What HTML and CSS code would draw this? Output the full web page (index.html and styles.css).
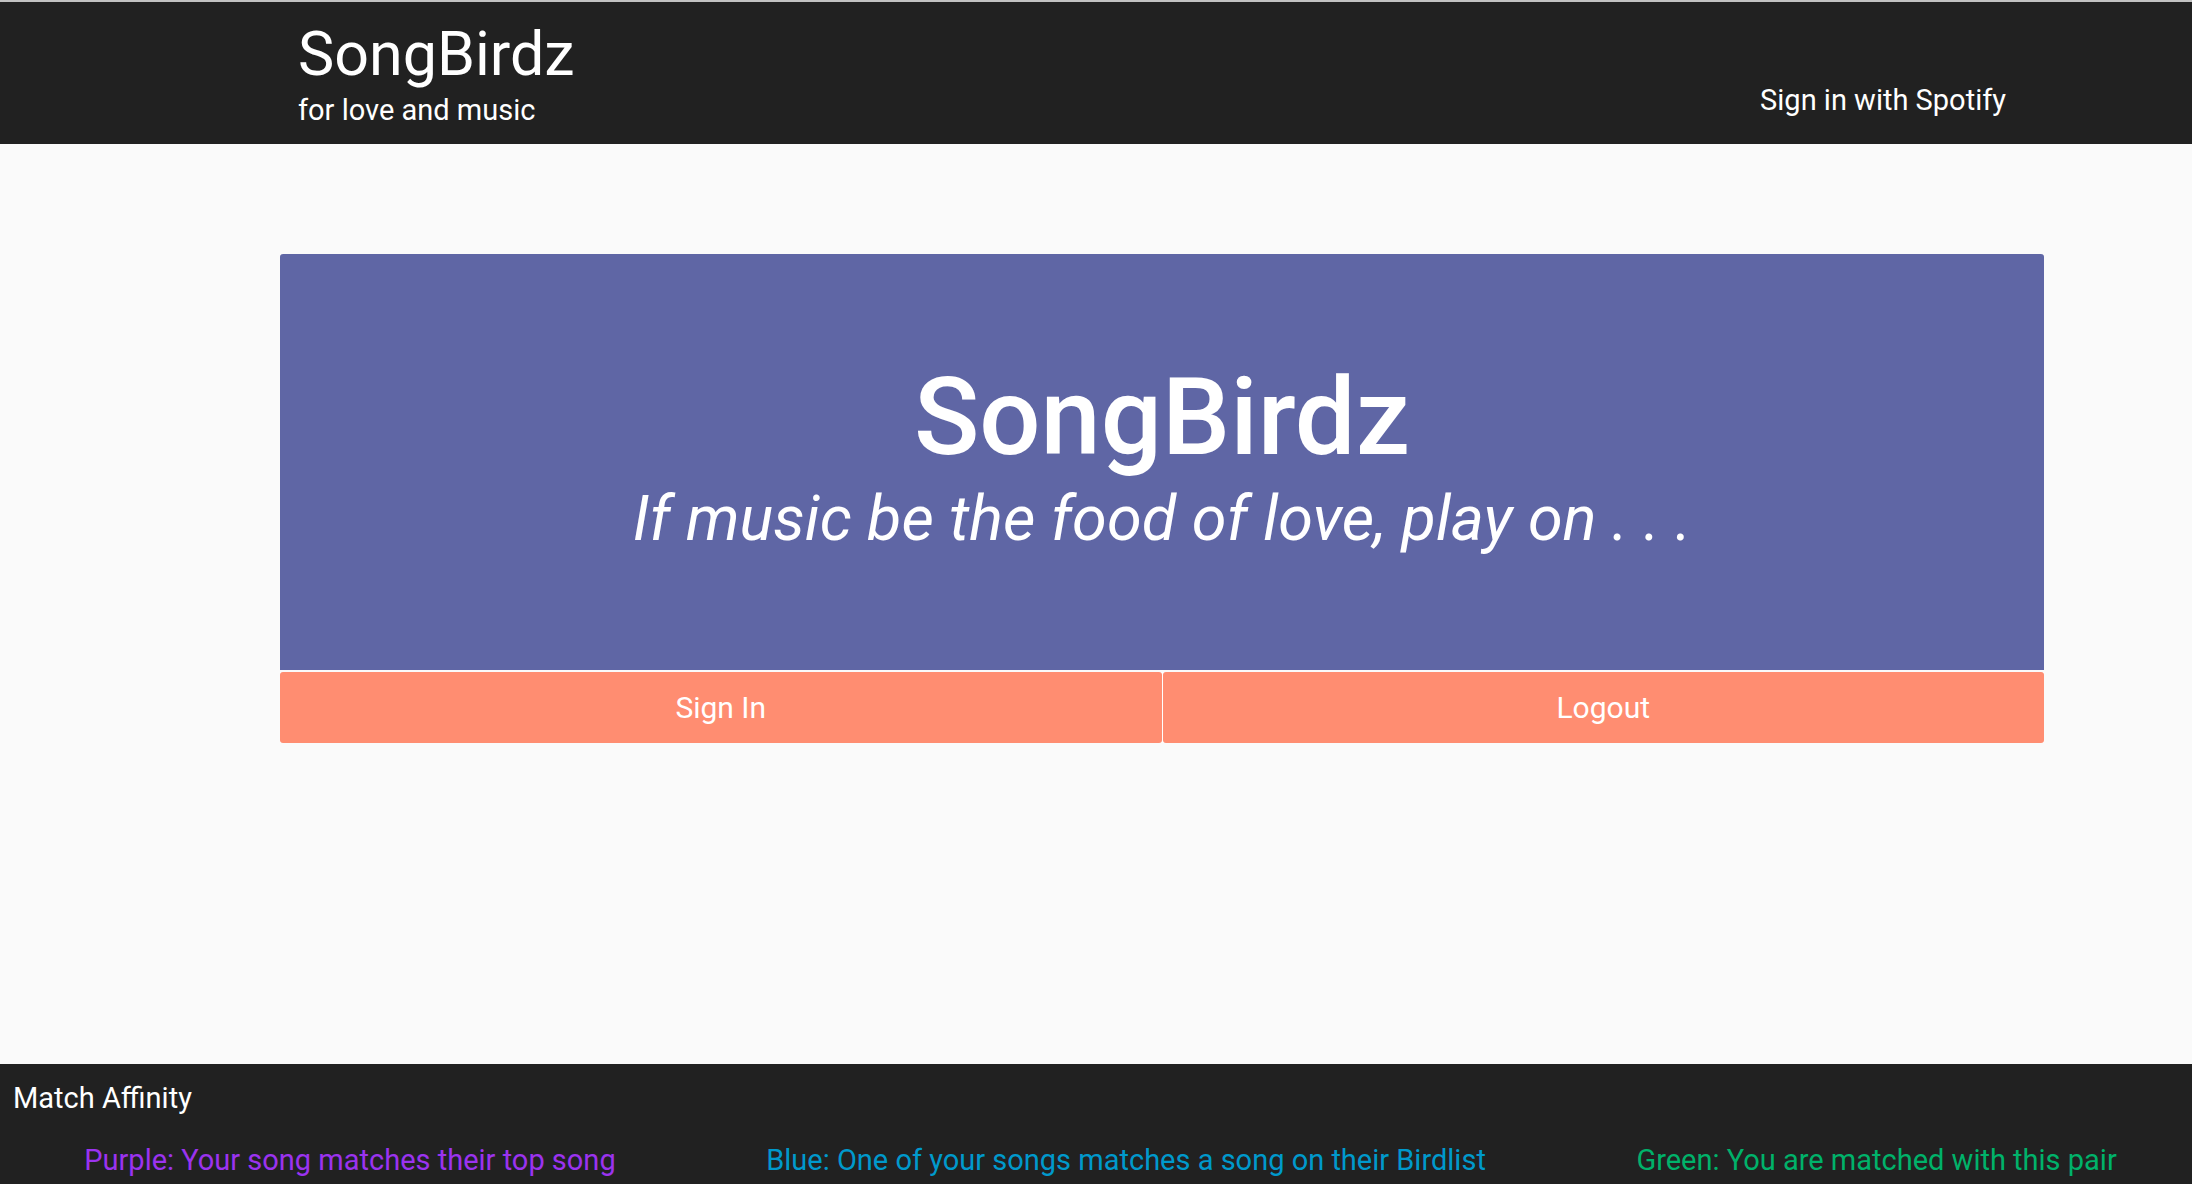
FILE: index.html
```html
<!DOCTYPE html>
<html lang="en">
<head>
<meta charset="utf-8">
<title>SongBirdz</title>
<link rel="stylesheet" href="styles.css">
</head>
<body>
<nav class="navbar">
  <div class="brand">
    <div class="brand-title">SongBirdz</div>
    <div class="brand-sub">for love and music</div>
  </div>
  <a class="nav-link" href="#">Sign in with Spotify</a>
</nav>
<main class="main">
  <section class="card">
    <div class="hero">
      <h1 class="hero-title">SongBirdz</h1>
      <p class="hero-tagline">If music be the food of love, play on . . .</p>
    </div>
    <div class="actions">
      <button class="btn">Sign In</button>
      <button class="btn">Logout</button>
    </div>
  </section>
</main>
<footer class="footer">
  <div class="footer-title">Match Affinity</div>
  <div class="legend">
    <span class="legend-item purple">Purple: Your song matches their top song</span>
    <span class="legend-item blue">Blue: One of your songs matches a song on their Birdlist</span>
    <span class="legend-item green">Green: You are matched with this pair</span>
  </div>
</footer>
</body>
</html>
```
FILE: styles.css
```css
html, body {
  margin: 0;
  padding: 0;
  overflow: hidden;
}
body {
  background: #fafafa;
  font-family: Roboto, "Noto Sans", sans-serif;
  color: #fff;
}
.navbar {
  box-sizing: border-box;
  height: 144px;
  background: #212121;
  border-top: 2px solid #c2c2c2;
  display: flex;
  justify-content: space-between;
  align-items: flex-start;
  padding: 0 186px 0 298px;
}
.brand {
  display: flex;
  flex-direction: column;
  padding-top: 22px;
}
.brand-title {
  font-size: 61px;
  line-height: 60px;
}
.brand-sub {
  font-size: 29px;
  line-height: 32px;
  margin-top: 10px;
}
.nav-link {
  color: #fff;
  text-decoration: none;
  font-size: 29px;
  line-height: 32px;
  margin-top: 82px;
}
.main {
  padding: 110px 148px 0 280px;
}
.card {
  display: flex;
  flex-direction: column;
  gap: 2px;
}
.hero {
  box-sizing: border-box;
  height: 416px;
  background: #5f66a5;
  border-radius: 3px 3px 0 0;
  display: flex;
  flex-direction: column;
  align-items: center;
  padding-top: 110px;
}
.hero-title {
  margin: 0;
  font-size: 108px;
  line-height: 106px;
  font-weight: 500;
}
.hero-tagline {
  margin: 13px 0 0;
  font-size: 63px;
  line-height: 72px;
  font-style: italic;
}
.actions {
  display: flex;
  gap: 1px;
  background: #fff;
}
.btn {
  flex: 1;
  height: 71px;
  border: none;
  border-radius: 3px;
  background: #ff8d71;
  color: #fff;
  font-family: Roboto, "Noto Sans", sans-serif;
  font-size: 30px;
  padding: 0;
}
.footer {
  margin-top: 321px;
  background: #212121;
  height: 120px;
  box-sizing: border-box;
  padding-top: 18px;
}
.footer-title {
  font-size: 29px;
  line-height: 32px;
  padding-left: 13px;
}
.legend {
  display: flex;
  justify-content: space-around;
  margin-top: 30px;
  padding-left: 9px;
  font-size: 29px;
  line-height: 32px;
}
.purple { color: #9b33ef; }
.blue { color: #0099cc; }
.green { color: #00b26a; }
```
